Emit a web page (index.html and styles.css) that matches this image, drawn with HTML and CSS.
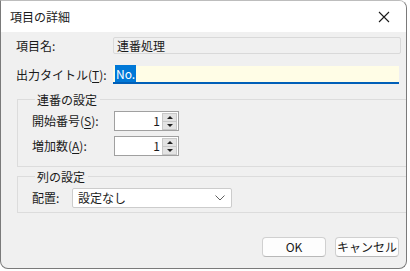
FILE: index.html
```html
<!DOCTYPE html>
<html>
<head>
    <title>項目の詳細</title>
    <link rel="stylesheet" href="styles.css">
</head>
<body>
    <div class="dialog">
        <div class="titlebar">
            <span class="title">項目の詳細</span>
            <svg class="close" width="12" height="12" viewBox="0 0 12 12">
                <path d="M1 1 L11 11 M11 1 L1 11" stroke="#1a1a1a" stroke-width="1.1" fill="none"/>
            </svg>
        </div>
        <div class="content">
            <div class="row">
                <span class="label">項目名:</span>
                <div class="readonly">連番処理</div>
            </div>
            <div class="row">
                <span class="label">出力タイトル(<u>T</u>):</span>
                <div class="edit"><span class="sel">No.</span></div>
            </div>

            <!-- 連番の設定 -->
            <fieldset class="group group-seq">
                <legend>連番の設定</legend>
                <div class="grow">
                    <span class="glabel">開始番号(<u>S</u>):</span>
                    <div class="spin">
                        <span class="num">1</span>
                        <div class="arrows">
                            <span class="up"></span>
                            <span class="down"></span>
                        </div>
                    </div>
                </div>
                <div class="grow">
                    <span class="glabel">増加数(<u>A</u>):</span>
                    <div class="spin">
                        <span class="num">1</span>
                        <div class="arrows">
                            <span class="up"></span>
                            <span class="down"></span>
                        </div>
                    </div>
                </div>
            </fieldset>

            <!-- 列の設定 -->
            <fieldset class="group group-col">
                <legend>列の設定</legend>
                <div class="grow">
                    <span class="clabel">配置:</span>
                    <div class="combo">
                        <span>設定なし</span>
                        <svg width="10" height="6" viewBox="0 0 10 6">
                            <path d="M0.5 0.5 L5 5 L9.5 0.5" stroke="#606060" stroke-width="1" fill="none"/>
                        </svg>
                    </div>
                </div>
            </fieldset>

            <div class="buttons">
                <button class="btn">OK</button>
                <button class="btn">キャンセル</button>
            </div>
        </div>
    </div>
</body>
</html>
```
FILE: styles.css
```css
body {
    margin: 0;
    background-color: #ffffff;
    font-family: "Noto Sans CJK JP", "Noto Sans", sans-serif;
    font-size: 12px;
    color: #1a1a1a;
    width: 410px;
    height: 271px;
    overflow: hidden;
}
.dialog {
    width: 405px;
    height: 267px;
    border: 1px solid #7a7a7a;
    border-top-color: #bdbdbd;
    border-radius: 0 8px 8px 8px;
    background-color: #f0f0f0;
    overflow: hidden;
    display: flex;
    flex-direction: column;
}
.titlebar {
    height: 31px;
    background-color: #ffffff;
    display: flex;
    align-items: center;
    justify-content: space-between;
    padding: 0 16px 0 9px;
    flex-shrink: 0;
}
.title {
    font-size: 12px;
    line-height: 16px;
}
.content {
    padding: 5px 5px 0 15px;
    display: flex;
    flex-direction: column;
    flex: 1;
}
.row {
    display: flex;
    align-items: center;
    height: 17px;
    margin-bottom: 12px;
}
.label {
    width: 97px;
    line-height: 16px;
}
u {
    text-decoration: underline;
    text-underline-offset: 2px;
}
.readonly {
    width: 280px;
    height: 15px;
    border: 1px solid #d9d9d9;
    border-radius: 2px;
    background-color: #f0f0f0;
    padding: 0 3px;
    line-height: 15px;
}
.edit {
    width: 284px;
    height: 16px;
    background-color: #fffde6;
    border-bottom: 2px solid #005fb8;
    padding: 0 0 0 2px;
    line-height: 16px;
}
.sel {
    background-color: #0078d7;
    color: #ffffff;
    padding: 0 1px;
}
.group {
    margin: 0 0 0 1px;
    width: 384px;
    border: 1px solid #dcdcdc;
    border-radius: 0;
    padding: 0 0 0 14px;
    min-width: 0;
}
.group legend {
    padding: 0 3px 0 2px;
    margin-left: 3px;
    line-height: 15px;
}
.group-seq {
    height: 69px;
    margin-top: -3px;
    padding-top: 4px;
}
.group-col {
    height: 38px;
    margin-top: 2px;
    padding-top: 4px;
}
.grow {
    display: flex;
    align-items: center;
    height: 20px;
    margin-bottom: 5px;
}
.glabel {
    width: 82px;
    line-height: 16px;
}
.clabel {
    width: 40px;
    line-height: 16px;
}
.spin {
    width: 63px;
    height: 18px;
    border: 1px solid #a0a0a0;
    background-color: #ffffff;
    display: flex;
    align-items: center;
    justify-content: flex-end;
}
.num {
    margin-right: 2px;
    line-height: 16px;
}
.arrows {
    width: 15px;
    height: 17px;
    display: flex;
    flex-direction: column;
    margin-right: 1px;
}
.arrows span {
    flex: 1;
    background-color: #e3e3e3;
    border: 1px solid #c8c8c8;
    position: relative;
}
.arrows .up {
    border-bottom: none;
}
.arrows .up::after,
.arrows .down::after {
    content: "";
    position: absolute;
    left: 4px;
    border-left: 3px solid transparent;
    border-right: 3px solid transparent;
}
.arrows .up::after {
    top: 2px;
    border-bottom: 3px solid #202020;
}
.arrows .down::after {
    top: 2px;
    border-top: 3px solid #202020;
}
.combo {
    width: 147px;
    height: 18px;
    border: 1px solid #cccccc;
    border-radius: 2px;
    background-color: #ffffff;
    display: flex;
    align-items: center;
    justify-content: space-between;
    padding: 0 6px 0 5px;
    line-height: 16px;
}
.buttons {
    display: flex;
    justify-content: flex-end;
    gap: 9px;
    margin-top: 24px;
    padding-right: 2px;
}
.btn {
    font-family: "Noto Sans CJK JP", "Noto Sans", sans-serif;
    font-size: 12px;
    color: #1a1a1a;
    width: 64px;
    height: 20px;
    padding: 0;
    background-color: #fdfdfd;
    border: 1px solid #d0d0d0;
    border-bottom-color: #b8b8b8;
    border-radius: 4px;
    line-height: 16px;
}
```
